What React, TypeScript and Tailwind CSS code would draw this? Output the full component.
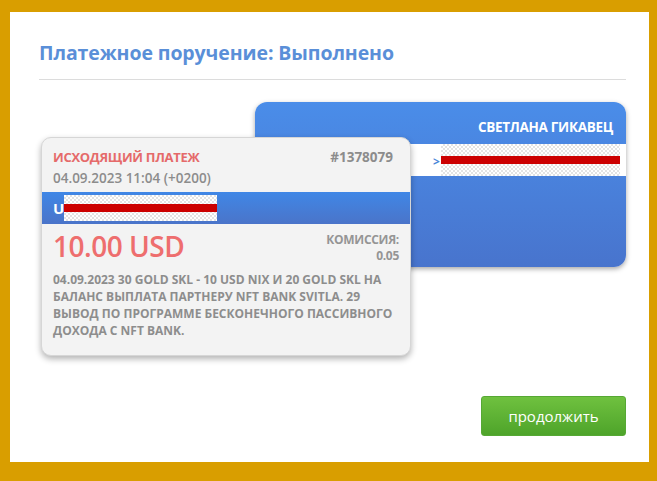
import React from "react";

const checker =
  "bg-[repeating-conic-gradient(#e3e3e3_0_25%,#ffffff_0_50%)] bg-[length:4px_4px]";

const descLines = [
  "04.09.2023 30 GOLD SKL - 10 USD NIX И 20 GOLD SKL НА",
  "БАЛАНС ВЫПЛАТА ПАРТНЕРУ NFT BANK SVITLA. 29",
  "ВЫВОД ПО ПРОГРАММЕ БЕСКОНЕЧНОГО ПАССИВНОГО",
  "ДОХОДА С NFT BANK.",
];

export default function App() {
  return (
    <div
      className="w-[657px] h-[481px] bg-[#d99e00] pt-[12px] pl-[10px] pr-[8px] pb-[19px]"
      style={{ fontFamily: '"Open Sans", "Noto Sans", sans-serif' }}
    >
      <div className="w-full h-full bg-white pl-[29px] pr-[23px] pt-[28px] flex flex-col">
        <h1 className="text-[19.5px] leading-[25px] font-bold text-[#5a8fd8] tracking-[-0.1px]">
          Платежное поручение: Выполнено
        </h1>
        <div className="mt-[14px] h-px bg-[#dcdcdc]" />

        <div className="grid mt-[22px]">
          {/* Recipient card */}
          <div className="col-start-1 row-start-1 ml-[216px] w-[371px] h-[165px] rounded-[12px] bg-gradient-to-b from-[#4a8de9] to-[#4874cd] shadow-[0_2px_5px_rgba(0,0,0,0.35)] flex flex-col">
            <div className="pt-[15px] pr-[13px] text-right text-white font-bold text-[13.5px] leading-[20px] tracking-[-0.3px]">
              СВЕТЛАНА ГИКАВЕЦ
            </div>
            <div className="mt-[7px] h-[32px] bg-white flex items-center pl-[178px] pr-[6px]">
              <span className="text-[#4a86d8] font-bold text-[12px] leading-none mt-[4px] w-[8px]">
                &gt;
              </span>
              <div className={`flex-1 h-full flex items-center ${checker}`}>
                <div className="w-full h-[8px] bg-[#cc0000]" />
              </div>
            </div>
          </div>

          {/* Payment card */}
          <div className="col-start-1 row-start-1 ml-[2px] mt-[35px] w-[370px] h-[219px] rounded-[10px] bg-[#f3f3f3] border border-[#d6d6d6] shadow-[0_3px_6px_rgba(0,0,0,0.3)] flex flex-col overflow-hidden">
            <div className="pt-[9px] px-[11px] pr-[17px] flex justify-between items-start">
              <div>
                <div className="text-[13px] leading-[20px] font-bold text-[#e56a6a] tracking-[-0.3px]">
                  ИСХОДЯЩИЙ ПЛАТЕЖ
                </div>
                <div className="text-[13.5px] leading-[22px] font-semibold text-[#8c8c8c]">
                  04.09.2023 11:04 (+0200)
                </div>
              </div>
              <div className="text-[13.5px] leading-[20px] font-bold text-[#8c8c8c]">
                #1378079
              </div>
            </div>
            <div className="mt-[3px] h-[32px] bg-gradient-to-b from-[#3f87e6] to-[#4a74c9] flex items-center pl-[11px]">
              <span className="text-white font-bold text-[15px] leading-none w-[11px]">U</span>
              <div className={`w-[153px] h-[26px] flex items-center ${checker}`}>
                <div className="w-full h-[8px] bg-[#cc0000]" />
              </div>
            </div>
            <div className="pt-[4px] px-[11px] pr-[11px] flex justify-between items-start">
              <div className="text-[28px] leading-[36px] font-semibold text-[#ee6e6e] tracking-[-0.5px]">
                10.00 USD
              </div>
              <div className="text-right text-[12px] leading-[16px] font-bold text-[#959595] pt-[4px] tracking-[-0.3px]">
                <div>КОМИССИЯ:</div>
                <div>0.05</div>
              </div>
            </div>
            <div className="mt-[7px] px-[11px] text-[12px] leading-[17px] font-bold text-[#8d8d8d] uppercase">
              {descLines.map((l) => (
                <div key={l} className="whitespace-nowrap">
                  {l}
                </div>
              ))}
            </div>
          </div>
        </div>

        <button className="self-end mt-[40px] w-[145px] h-[40px] rounded-[3px] bg-gradient-to-b from-[#6fc13f] to-[#4ea42a] border border-[#56a834] text-white text-[15px] leading-none">
          продолжить
        </button>
      </div>
    </div>
  );
}
